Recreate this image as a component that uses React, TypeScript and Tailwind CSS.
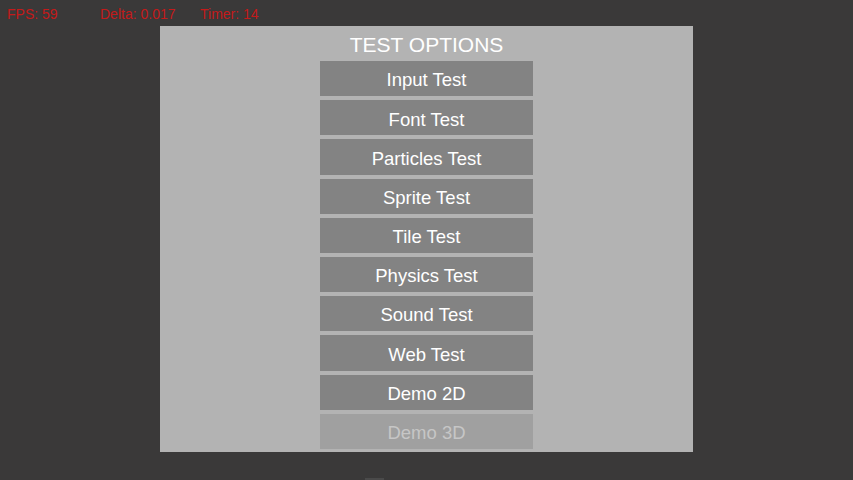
import React from 'react';

const tests = [
  'Input Test',
  'Font Test',
  'Particles Test',
  'Sprite Test',
  'Tile Test',
  'Physics Test',
  'Sound Test',
  'Web Test',
  'Demo 2D',
];

export default function App() {
  return (
    <div className="h-[480px] w-[853px] bg-[#3a3939] flex flex-col overflow-hidden" style={{ fontFamily: '"Liberation Sans", Arial, sans-serif' }}>
      {/* Stats bar */}
      <div className="h-[26px] pt-[2px] flex items-center text-[14px] text-[#c41a1a] leading-none">
        <span className="ml-[7px] w-[93px]">FPS: 59</span>
        <span className="w-[100px]">Delta: 0.017</span>
        <span>Timer: 14</span>
      </div>

      {/* Options panel */}
      <div className="ml-[160px] w-[533px] h-[426px] bg-[#b3b3b3] flex flex-col items-center">
        <div className="h-[35px] pt-[1px] flex items-center justify-center text-white text-[21px] leading-none">TEST OPTIONS</div>
        <div className="flex flex-col gap-[4px]">
          {tests.map((t) => (
            <button key={t} className="w-[213px] h-[35.2px] pt-[4px] bg-[#838383] text-white text-[18.5px] leading-none flex items-center justify-center">
              {t}
            </button>
          ))}
          <button disabled className="w-[213px] h-[35.2px] pt-[4px] bg-[#a0a0a0] text-[#c6c6c6] text-[18.5px] leading-none flex items-center justify-center">
            Demo 3D
          </button>
        </div>
      </div>

      <div className="mt-auto ml-[365px] w-[19px] h-[2px] bg-[#4a4a4a]" />
    </div>
  );
}
